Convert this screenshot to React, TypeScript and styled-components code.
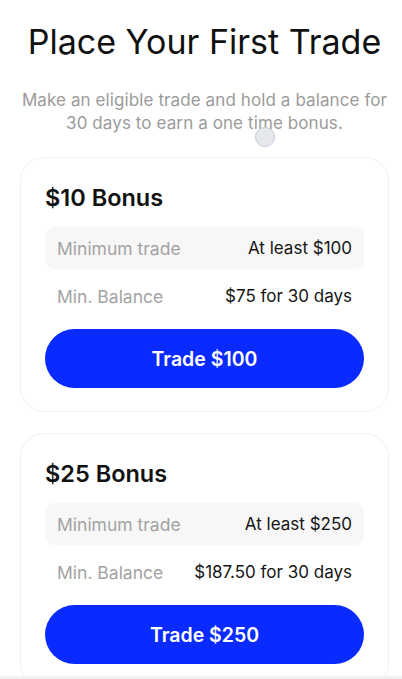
import styled, { createGlobalStyle } from "styled-components";

const GlobalStyle = createGlobalStyle`
  html, body {
    margin: 0;
    padding: 0;
    background: #ffffff;
  }

  body {
    font-family: Inter, "Noto Sans", Roboto, sans-serif;
    color: #111111;
    -webkit-font-smoothing: antialiased;
  }

  * {
    box-sizing: border-box;
  }
`;

const Page = styled.main`
  position: relative;
  display: flex;
  flex-direction: column;
  align-items: center;
  padding: 20px 13px 0 20px;
  height: 679px;
  overflow: hidden;
`;

const Title = styled.h1`
  margin: 0;
  font-size: 34px;
  line-height: 44px;
  font-weight: 400;
  text-align: center;
  color: #111111;
  white-space: nowrap;
`;

const Subtitle = styled.p`
  margin: 25px 0 0;
  font-size: 17px;
  line-height: 23px;
  letter-spacing: 0.1px;
  text-align: center;
  color: #9b9b9b;
  white-space: nowrap;
`;

const TouchDot = styled.span`
  position: absolute;
  left: 255px;
  top: 127px;
  width: 20px;
  height: 20px;
  border-radius: 50%;
  background: #e6e8ec;
  border: 1.5px solid #c3cad9;
`;

const CardList = styled.div`
  display: flex;
  flex-direction: column;
  gap: 21px;
  width: 100%;
  margin-top: 22px;
`;

const Card = styled.section`
  display: flex;
  flex-direction: column;
  padding: 25px 24px 23px;
  border: 1px solid #f0f0f0;
  border-radius: 24px;
  background: #ffffff;
`;

const CardTitle = styled.h2`
  margin: 0 0 14px;
  font-size: 23.5px;
  line-height: 30px;
  font-weight: 600;
  color: #111111;
`;

const Rows = styled.div`
  display: flex;
  flex-direction: column;
  gap: 6px;
`;

const Row = styled.div<{ $shaded?: boolean }>`
  display: flex;
  justify-content: space-between;
  align-items: center;
  height: 42px;
  padding: 0 12px 0 12px;
  border-radius: 9px;
  background: ${(p) => (p.$shaded ? "#f7f7f7" : "transparent")};
`;

const Label = styled.span`
  font-size: 17.5px;
  color: #a3a3a3;
`;

const Value = styled.span`
  font-size: 17px;
  color: #151515;
`;

const TradeButton = styled.button`
  margin-top: 12px;
  height: 59px;
  border: none;
  border-radius: 30px;
  background: #0a2bff;
  color: #ffffff;
  font-family: inherit;
  font-size: 19.5px;
  font-weight: 600;
  cursor: pointer;
`;

const BottomBar = styled.div`
  position: absolute;
  left: 0;
  right: 0;
  bottom: 0;
  height: 3px;
  background: #f1f1f1;
`;

type Bonus = {
  amount: string;
  minTrade: string;
  minBalance: string;
  trade: string;
};

const bonuses: Bonus[] = [
  { amount: "$10", minTrade: "$100", minBalance: "$75", trade: "$100" },
  { amount: "$25", minTrade: "$250", minBalance: "$187.50", trade: "$250" },
];

const App = () => {
  return (
    <>
      <GlobalStyle />
      <Page>
        <Title>Place Your First Trade</Title>
        <Subtitle>
          Make an eligible trade and hold a balance for
          <br />
          30 days to earn a one time bonus.
        </Subtitle>
        <TouchDot />
        <CardList>
          {bonuses.map((b) => (
            <Card key={b.amount}>
              <CardTitle>{b.amount} Bonus</CardTitle>
              <Rows>
                <Row $shaded>
                  <Label>Minimum trade</Label>
                  <Value>At least {b.minTrade}</Value>
                </Row>
                <Row>
                  <Label>Min. Balance</Label>
                  <Value>{b.minBalance} for 30 days</Value>
                </Row>
              </Rows>
              <TradeButton>Trade {b.trade}</TradeButton>
            </Card>
          ))}
        </CardList>
        <BottomBar />
      </Page>
    </>
  );
};

export default App;
